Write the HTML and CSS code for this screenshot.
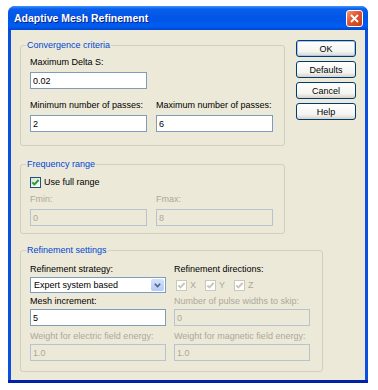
FILE: index.html
```html
<!DOCTYPE html>
<html lang="en">

<head>
  <meta charset="UTF-8">
  <meta name="viewport" content="width=device-width, initial-scale=1.0">
  <title>Adaptive Mesh Refinement</title>

  <link rel="stylesheet" href="styles.css">
</head>

<body>
  <div class="window">
    <div class="titlebar">
      <span class="title">Adaptive Mesh Refinement</span>
      <span class="close">
        <svg width="9" height="9" viewBox="0 0 9 9">
          <path d="M1 1 L8 8 M8 1 L1 8" stroke="#fff" stroke-width="1.8" />
        </svg>
      </span>
    </div>

    <div class="client">
      <div class="upper">
        <div class="groups">
          <fieldset class="group conv">
            <legend>Convergence criteria</legend>
            <div class="field single">
              <label>Maximum Delta S:</label>
              <input type="text" value="0.02">
            </div>
            <div class="pair">
              <div class="field">
                <label>Minimum number of passes:</label>
                <input type="text" value="2">
              </div>
              <div class="field">
                <label>Maximum number of passes:</label>
                <input type="text" value="6">
              </div>
            </div>
          </fieldset>

          <fieldset class="group freq">
            <legend>Frequency range</legend>
            <div class="check">
              <span class="box">
                <svg width="11" height="11" viewBox="0 0 11 11">
                  <path d="M2.3 5.3 L4.4 7.4 L8.6 3.0" fill="none" stroke="#21a121" stroke-width="1.9" />
                </svg>
              </span>
              <span>Use full range</span>
            </div>
            <div class="pair">
              <div class="field disabled">
                <label>Fmin:</label>
                <input type="text" value="0" disabled>
              </div>
              <div class="field disabled">
                <label>Fmax:</label>
                <input type="text" value="8" disabled>
              </div>
            </div>
          </fieldset>
        </div>

        <div class="buttons">
          <button class="default">OK</button>
          <button>Defaults</button>
          <button>Cancel</button>
          <button>Help</button>
        </div>
      </div>

      <fieldset class="group refine">
        <legend>Refinement settings</legend>
        <div class="grid">
          <label>Refinement strategy:</label>
          <label>Refinement directions:</label>

          <div class="select">
            <span class="value">Expert system based</span>
            <span class="drop">
              <svg width="7" height="5" viewBox="0 0 7 5">
                <path d="M0.8 0.8 L3.5 3.5 L6.2 0.8" fill="none" stroke="#4d6185" stroke-width="1.6" />
              </svg>
            </span>
          </div>
          <div class="dirs">
            <div class="check off">
              <span class="box">
                <svg width="11" height="11" viewBox="0 0 11 11">
                  <path d="M2.3 5.3 L4.4 7.4 L8.6 3.0" fill="none" stroke="#c9c7ba" stroke-width="1.9" />
                </svg>
              </span>
              <span>X</span>
            </div>
            <div class="check off">
              <span class="box">
                <svg width="11" height="11" viewBox="0 0 11 11">
                  <path d="M2.3 5.3 L4.4 7.4 L8.6 3.0" fill="none" stroke="#c9c7ba" stroke-width="1.9" />
                </svg>
              </span>
              <span>Y</span>
            </div>
            <div class="check off">
              <span class="box">
                <svg width="11" height="11" viewBox="0 0 11 11">
                  <path d="M2.3 5.3 L4.4 7.4 L8.6 3.0" fill="none" stroke="#c9c7ba" stroke-width="1.9" />
                </svg>
              </span>
              <span>Z</span>
            </div>
          </div>

          <label class="mid">Mesh increment:</label>
          <label class="mid dim">Number of pulse widths to skip:</label>
          <input class="after" type="text" value="5">
          <input class="after" type="text" value="0" disabled>

          <label class="low dim">Weight for electric field energy:</label>
          <label class="low dim">Weight for magnetic field energy:</label>
          <input class="after" type="text" value="1.0" disabled>
          <input class="after" type="text" value="1.0" disabled>
        </div>
      </fieldset>
    </div>
  </div>
</body>

</html>
```

FILE: styles.css
```css
body,
html {
  font-family: 'Liberation Sans', Arial, sans-serif;
  font-size: 9px;
  background-color: #fff;

  padding: 0;
  margin: 0;
}

* {
  box-sizing: border-box;
}

.window {
  margin: 6px 0 0 8px;
  width: 360px;

  background-color: #0a4fe0;
  border-radius: 7px 7px 0 0;
  border-bottom: 3px solid #0021a8;
}

.titlebar {
  display: flex;
  align-items: center;
  justify-content: space-between;

  height: 24px;
  padding: 0 5px 0 6px;

  border-radius: 7px 7px 0 0;
  background: linear-gradient(#3d95ff 0, #0a5eeb 3px, #0055e5 50%, #005cf0 85%, #0046d0 100%);
}

.title {
  font-size: 10.5px;
  font-weight: bold;
  color: #fff;
  text-shadow: 1px 1px 0 #0a1e8a;
}

.close {
  display: flex;
  justify-content: center;
  align-items: center;

  width: 17px;
  height: 17px;

  border: 1px solid #fff;
  border-radius: 3px;
  background: linear-gradient(135deg, #f09a7c, #e0552f 45%, #c83c16);
}

.client {
  margin: 0 3px;
  height: 350px;

  background-color: #ece9d8;
}

.upper {
  display: flex;
}

.groups {
  width: 265px;
  margin-left: 9px;
}

.group {
  margin: 0;
  min-width: 0;

  border: 1px solid #d0d0bf;
  border-radius: 3px;
}

.group legend {
  margin-left: -4px;
  padding: 0 1px;

  line-height: 13px;
  color: #0046d5;
}

label {
  display: block;
  height: 13px;
  line-height: 13px;
  white-space: nowrap;
  color: #000;
}

input {
  display: block;
  width: 100%;
  height: 17px;
  margin: 0;
  padding: 0 2px;

  font-family: inherit;
  font-size: 9px;
  color: #000;

  background-color: #fff;
  border: 1px solid #7f9db9;
  border-radius: 0;
  outline: none;
}

input:disabled {
  color: #aca899;
  background-color: #ece9d8;
  border-color: #b9c3cf;
}

.field label {
  margin-bottom: 3px;
}

.field.disabled label,
label.dim {
  color: #aca899;
}

.field.single {
  width: 117px;
}

.pair {
  display: flex;
  gap: 9px;
}

.pair .field {
  width: 117px;
}

.conv {
  margin-top: 9px;
  padding: 4px 11px 13px 9px;
}

.conv .pair {
  margin-top: 10px;
}

.freq {
  margin-top: 12px;
  padding: 5px 11px 7px 9px;
}

.freq .pair {
  margin-top: 4px;
}

.check {
  display: flex;
  align-items: center;
  gap: 3px;

  height: 13px;
  line-height: 13px;
}

.check .box {
  display: flex;

  width: 11px;
  height: 11px;

  border: 1px solid #1c5180;
  background: linear-gradient(135deg, #dcdcd7, #fff);
}

.check .box svg {
  margin: -1px;
}

.check.off {
  color: #aca899;
}

.check.off .box {
  border-color: #cac8bb;
  background: #fff;
}

.buttons {
  display: flex;
  flex-direction: column;
  gap: 4px;

  margin: 10px 0 0 11px;
}

.buttons button {
  width: 60px;
  height: 17px;
  padding: 0;

  font-family: inherit;
  font-size: 9px;
  color: #000;

  border: 1px solid #003c74;
  border-radius: 3px;
  background: linear-gradient(#fff, #f4f4f0 70%, #d8d3c8);
}

.buttons button.default {
  box-shadow: inset 0 0 0 1px #a9c4ee;
}

.refine {
  width: 303px;
  margin: 10px 0 0 9px;
  padding: 6px 13px 10px 9px;
}

.grid {
  display: grid;
  grid-template-columns: 136px 136px;
  column-gap: 8px;
  align-items: center;
}

.select {
  display: flex;
  align-items: center;
  justify-content: space-between;

  height: 16px;
  margin-top: 1px;
  padding: 0 1px 0 3px;

  background-color: #fff;
  border: 1px solid #7f9db9;
}

.select .drop {
  display: flex;
  justify-content: center;
  align-items: center;

  width: 13px;
  height: 12px;

  border-radius: 2px;
  background: linear-gradient(#d4e1fc, #b3c9f7);
}

.dirs {
  display: flex;
  gap: 9px;
  margin: 1px 0 0 2px;
}

label.mid {
  margin-top: 2px;
}

label.low {
  margin-top: 4px;
}

input.after {
  margin-top: 1px;
}
```
